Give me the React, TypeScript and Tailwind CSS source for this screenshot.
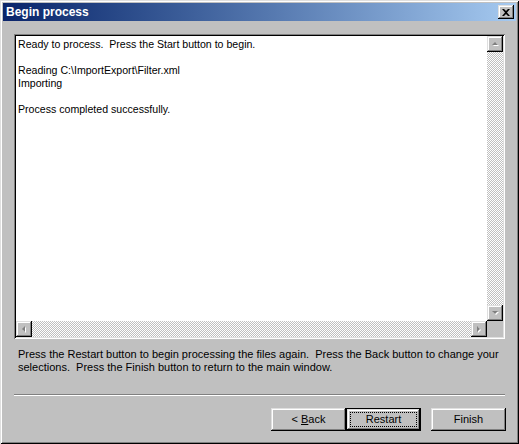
const raised =
  "shadow-[inset_-1px_-1px_#000,inset_1px_1px_#dfdfdf,inset_-2px_-2px_#808080,inset_2px_2px_#fff]";
const checker =
  "bg-[repeating-conic-gradient(#ffffff_0_25%,#c0c0c0_0_50%)] bg-[length:2px_2px]";

function Arrow({ dir }: { dir: "up" | "down" | "left" | "right" }) {
  const pts: Record<string, string> = {
    up: "4,1 1,4 7,4",
    down: "1,1 7,1 4,4",
    left: "1,4 4,1 4,7",
    right: "1,1 1,7 4,4",
  };
  const vertical = dir === "up" || dir === "down";
  return (
    <div className={`flex h-[16px] w-[16px] shrink-0 items-center justify-center bg-[#c0c0c0] ${raised}`}>
      <svg width={vertical ? 9 : 6} height={vertical ? 6 : 9} viewBox={vertical ? "0 0 9 6" : "0 0 6 9"}>
        <polygon points={pts[dir]} fill="#fff" transform="translate(1,1)" />
        <polygon points={pts[dir]} fill="#808080" />
      </svg>
    </div>
  );
}

function Button({ label, isDefault }: { label: React.ReactNode; isDefault?: boolean }) {
  if (isDefault) {
    return (
      <div className="h-[23px] w-[75px] border border-black">
        <div className={`flex h-full w-full items-center justify-center bg-[#c0c0c0] p-[3px] ${raised}`}>
          <div className="flex h-full w-full items-center justify-center border border-dotted border-black">
            {label}
          </div>
        </div>
      </div>
    );
  }
  return (
    <div className={`flex h-[23px] w-[75px] items-center justify-center bg-[#c0c0c0] ${raised}`}>{label}</div>
  );
}

export default function App() {
  return (
    <div
      className="flex h-[444px] w-[519px] flex-col bg-[#c0c0c0] p-[3px] text-[11px] text-black shadow-[inset_1px_1px_#dfdfdf,inset_-1px_-1px_#000,inset_2px_2px_#fff,inset_-2px_-2px_#808080]"
      style={{ fontFamily: '"Liberation Sans", Arial, sans-serif' }}
    >
      {/* title bar */}
      <div className="flex h-[18px] items-center bg-gradient-to-r from-[#0a246a] to-[#a6caf0] pl-[3px] pr-[2px]">
        <span className="flex-1 text-[12px] font-bold text-white">Begin process</span>
        <div className={`flex h-[14px] w-[16px] items-center justify-center bg-[#c0c0c0] ${raised}`}>
          <svg width="8" height="7" viewBox="0 0 8 7">
            <path d="M0 0h2l2 2 2-2h2L5 3.5 8 7H6L4 5 2 7H0l3-3.5z" fill="#000" />
          </svg>
        </div>
      </div>

      {/* log box */}
      <div className="mx-[11px] mt-[13px] flex h-[305px] flex-col bg-white p-[2px] shadow-[inset_1px_1px_#808080,inset_-1px_-1px_#fff,inset_2px_2px_#000,inset_-2px_-2px_#dfdfdf]">
        <div className="flex min-h-0 flex-1">
          <div className="flex-1 whitespace-pre pl-[2px] pt-[2px] text-[10.6px] leading-[13px]">
            {"Ready to process.  Press the Start button to begin.\n\nReading C:\\ImportExport\\Filter.xml\nImporting\n\nProcess completed successfully."}
          </div>
          <div className="flex w-[16px] flex-col">
            <Arrow dir="up" />
            <div className={`flex-1 ${checker}`} />
            <Arrow dir="down" />
          </div>
        </div>
        <div className="flex h-[16px]">
          <Arrow dir="left" />
          <div className={`flex-1 ${checker}`} />
          <Arrow dir="right" />
          <div className="w-[16px] bg-[#c0c0c0]" />
        </div>
      </div>

      <p className="ml-[15px] mr-[12px] mt-[9px] leading-[13px]">
        Press the Restart button to begin processing the files again.&nbsp; Press the Back button to change your
        selections.&nbsp; Press the Finish button to return to the main window.
      </p>

      <div className="mx-[11px] mt-auto border-t border-b border-t-[#808080] border-b-white" />

      <div className="mb-[10px] mr-[10px] mt-[12px] flex justify-end">
        <Button
          label={
            <span>
              &lt; <span className="underline">B</span>ack
            </span>
          }
        />
        <Button label="Restart" isDefault />
        <div className="w-[10px]" />
        <Button label="Finish" />
      </div>
    </div>
  );
}
